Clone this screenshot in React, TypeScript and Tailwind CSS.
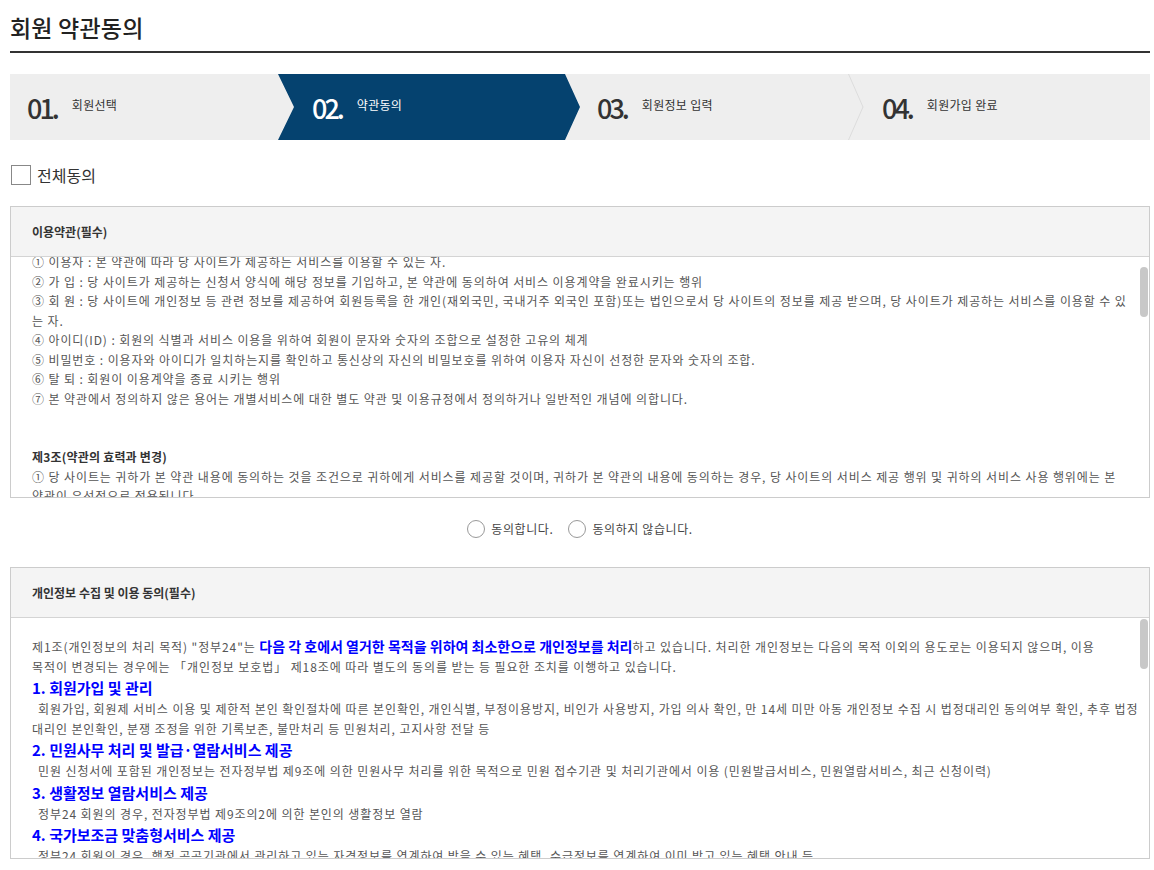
import { useEffect, useRef } from "react";

const steps = [
  { no: "01.", label: "회원선택", w: "w-[268px]", pad: "pl-[17px]" },
  { no: "02.", label: "약관동의", w: "w-[302px]", pad: "pl-[34px]", active: true },
  { no: "03.", label: "회원정보 입력", w: "w-[268px]", pad: "pl-[17px]" },
  { no: "04.", label: "회원가입 완료", w: "w-[302px]", pad: "pl-[18px]", divider: true },
];

/* 이용약관 본문 — 줄바꿈은 원본 화면 기준으로 고정 */
const termsBefore = [
  { t: "제2조(용어의 정의)", b: true },
  { t: "본 약관에서 사용하는 용어의 정의는 다음과 같습니다." },
];

const terms = [
  { t: "① 이용자 : 본 약관에 따라 당 사이트가 제공하는 서비스를 이용할 수 있는 자." },
  { t: "② 가 입 : 당 사이트가 제공하는 신청서 양식에 해당 정보를 기입하고, 본 약관에 동의하여 서비스 이용계약을 완료시키는 행위" },
  { t: "③ 회 원 : 당 사이트에 개인정보 등 관련 정보를 제공하여 회원등록을 한 개인(재외국민, 국내거주 외국인 포함)또는 법인으로서 당 사이트의 정보를 제공 받으며, 당 사이트가 제공하는 서비스를 이용할 수 있" },
  { t: "는 자." },
  { t: "④ 아이디(ID) : 회원의 식별과 서비스 이용을 위하여 회원이 문자와 숫자의 조합으로 설정한 고유의 체계" },
  { t: "⑤ 비밀번호 : 이용자와 아이디가 일치하는지를 확인하고 통신상의 자신의 비밀보호를 위하여 이용자 자신이 선정한 문자와 숫자의 조합." },
  { t: "⑥ 탈 퇴 : 회원이 이용계약을 종료 시키는 행위" },
  { t: "⑦ 본 약관에서 정의하지 않은 용어는 개별서비스에 대한 별도 약관 및 이용규정에서 정의하거나 일반적인 개념에 의합니다." },
  { t: "" },
  { t: "" },
  { t: "제3조(약관의 효력과 변경)", b: true },
  { t: "① 당 사이트는 귀하가 본 약관 내용에 동의하는 것을 조건으로 귀하에게 서비스를 제공할 것이며, 귀하가 본 약관의 내용에 동의하는 경우, 당 사이트의 서비스 제공 행위 및 귀하의 서비스 사용 행위에는 본" },
  { t: "약관이 우선적으로 적용됩니다." },
  { t: "② 당 사이트는 본 약관을 사전 고지 없이 변경할 수 있으며, 변경된 약관은 당 사이트 내에 공지하거나 e-mail을 통해 회원에게 공지하며, 공지와 동시에 그 효력이 발생됩니다." },
  { t: "" },
  { t: "" },
  { t: "제4조(약관 외 준칙)", b: true },
  { t: "① 본 약관에 명시되지 않은 사항은 전기통신기본법, 전기통신사업법, 정보통신윤리위원회심의규정 및 기타 관련 법령의 규정에 의합니다." },
];

const privacy = [
  {
    h: "1. 회원가입 및 관리",
    d: [
      "회원가입, 회원제 서비스 이용 및 제한적 본인 확인절차에 따른 본인확인, 개인식별, 부정이용방지, 비인가 사용방지, 가입 의사 확인, 만 14세 미만 아동 개인정보 수집 시 법정대리인 동의여부 확인, 추후 법정",
      "대리인 본인확인, 분쟁 조정을 위한 기록보존, 불만처리 등 민원처리, 고지사항 전달 등",
    ],
  },
  {
    h: "2. 민원사무 처리 및 발급·열람서비스 제공",
    d: ["민원 신청서에 포함된 개인정보는 전자정부법 제9조에 의한 민원사무 처리를 위한 목적으로 민원 접수기관 및 처리기관에서 이용 (민원발급서비스, 민원열람서비스, 최근 신청이력)"],
  },
  { h: "3. 생활정보 열람서비스 제공", d: ["정부24 회원의 경우, 전자정부법 제9조의2에 의한 본인의 생활정보 열람"] },
  {
    h: "4. 국가보조금 맞춤형서비스 제공",
    d: ["정부24 회원의 경우, 행정 공공기관에서 관리하고 있는 자격정보를 연계하여 받을 수 있는 혜택, 수급정보를 연계하여 이미 받고 있는 혜택 안내 등"],
  },
];

function Radio({ label }: { label: string }) {
  return (
    <label className="flex items-center gap-[6px]">
      <span className="w-[18px] h-[18px] rounded-full border border-[#999] bg-white" />
      <span className="text-[12px] text-[#444] tracking-[0.6px]">{label}</span>
    </label>
  );
}

function Thumb({ top }: { top: string }) {
  return <div className={`absolute right-[1px] ${top} w-[8px] h-[50px] rounded-full bg-[#c8c8c8]`} />;
}

export default function App() {
  const boxRef = useRef<HTMLDivElement>(null);
  const firstRef = useRef<HTMLDivElement>(null);

  useEffect(() => {
    if (boxRef.current && firstRef.current) {
      boxRef.current.scrollTop = firstRef.current.offsetTop + 5;
    }
  }, []);

  return (
    <div className="w-[1140px] ml-[10px] pt-[12px] font-['Noto_Sans_CJK_KR',sans-serif] text-[#555]">
      <h1 className="h-[30px] leading-[30px] text-[23px] font-medium text-[#222] tracking-[0.2px]">
        회원 약관동의
      </h1>
      <div className="mt-[9px] h-[2px] bg-[#333]" />

      {/* 진행 단계 */}
      <div className="mt-[21px] flex h-[66px] bg-[#eeeeee]">
        {steps.map((s) => (
          <div
            key={s.no}
            className={`${s.w} flex items-center ${s.pad} ${
              s.active
                ? "bg-[#05426f] text-white [clip-path:polygon(0_0,287px_0,302px_50%,287px_100%,0_100%,16px_50%)]"
                : "text-[#333]"
            }`}
          >
            {s.divider && (
              <svg width="16" height="66" viewBox="0 0 16 66" className="shrink-0 -ml-[18px] mr-[18px]">
                <polyline points="0.5,0 15,33 0.5,66" fill="none" stroke="#dcdcdc" strokeWidth="1" />
              </svg>
            )}
            <span className="text-[27px] font-medium tracking-[-3px] leading-none">{s.no}</span>
            <span className="ml-[15px] mb-[4px] text-[12px] tracking-[0.3px]">{s.label}</span>
          </div>
        ))}
      </div>

      {/* 전체동의 */}
      <label className="mt-[25px] ml-[1px] flex items-center gap-[6px] h-[20px]">
        <span className="w-[20px] h-[20px] border border-[#888] bg-white" />
        <span className="text-[16px] text-[#333]">전체동의</span>
      </label>

      {/* 이용약관 */}
      <div className="mt-[21px] border border-[#cccccc]">
        <div className="h-[50px] bg-[#f4f4f4] border-b border-[#d4d4d4] flex items-center pl-[21px] text-[12px] font-bold text-[#333]">
          이용약관(필수)
        </div>
        <div className="relative">
          <div
            ref={boxRef}
            className="relative h-[240px] overflow-hidden pl-[21px] pr-[20px] text-[12px] leading-[19.5px] tracking-[0.9px]"
          >
            <div className="h-[20px]" />
            {termsBefore.map((l, i) => (
              <div key={"b" + i} className={`whitespace-nowrap h-[19.5px] ${l.b ? "font-bold text-[#333] tracking-[0.2px]" : ""}`}>
                {l.t}
              </div>
            ))}
            {terms.map((l, i) => (
              <div
                key={i}
                ref={i === 0 ? firstRef : undefined}
                className={`whitespace-nowrap h-[19.5px] ${l.b ? "font-bold text-[#333] tracking-[0.2px]" : ""}`}
              >
                {l.t}
              </div>
            ))}
            <div className="h-[20px]" />
          </div>
          <Thumb top="top-[10px]" />
        </div>
      </div>

      <div className="mt-[21px] h-[20px] flex items-center justify-center gap-[15px]">
        <Radio label="동의합니다." />
        <Radio label="동의하지 않습니다." />
      </div>

      {/* 개인정보 수집 및 이용 동의 */}
      <div className="mt-[28px] border border-[#cccccc]">
        <div className="h-[50px] bg-[#f4f4f4] border-b border-[#d4d4d4] flex items-center pl-[21px] text-[12px] font-bold text-[#333]">
          개인정보 수집 및 이용 동의(필수)
        </div>
        <div className="relative">
          <div className="h-[240px] overflow-hidden pl-[21px] pr-[20px] pt-[19px] text-[12px] leading-[19.5px] tracking-[0.9px]">
            <div className="whitespace-nowrap">
              제1조(개인정보의 처리 목적) "정부24"는{" "}
              <span className="text-[14px] font-bold text-[#0000ff] tracking-normal">
                다음 각 호에서 열거한 목적을 위하여 최소한으로 개인정보를 처리
              </span>
              하고 있습니다. 처리한 개인정보는 다음의 목적 이외의 용도로는 이용되지 않으며, 이용
            </div>
            <div className="whitespace-nowrap">
              목적이 변경되는 경우에는 「개인정보 보호법」 제18조에 따라 별도의 동의를 받는 등 필요한 조치를 이행하고 있습니다.
            </div>
            {privacy.map((p) => (
              <div key={p.h}>
                <div className="text-[15px] font-bold text-[#0000ff] leading-[23px] tracking-normal whitespace-nowrap">
                  {p.h}
                </div>
                {p.d.map((d, i) => (
                  <div key={i} className={`whitespace-nowrap ${i === 0 ? "pl-[6px]" : ""}`}>
                    {d}
                  </div>
                ))}
              </div>
            ))}
          </div>
          <Thumb top="top-[1px]" />
        </div>
      </div>
    </div>
  );
}
